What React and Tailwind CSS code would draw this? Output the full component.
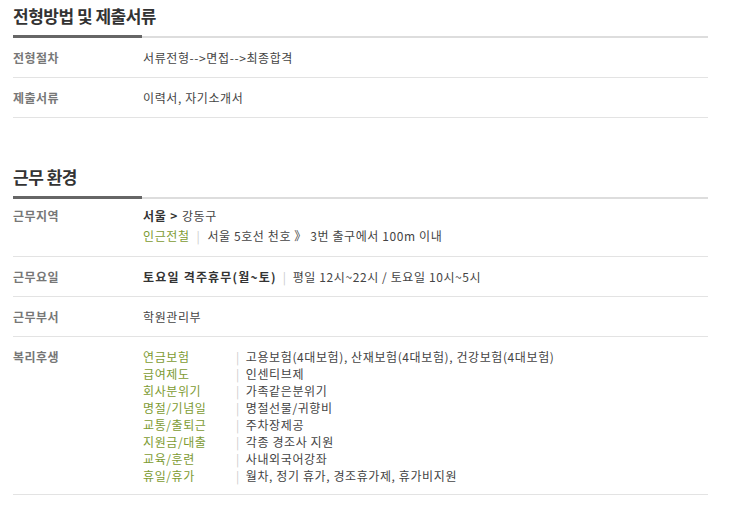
import React from 'react';

const green = 'text-[#7d9b32]';

const Heading = ({ children, className = '' }) => (
  <div className={className}>
    <h2 className="text-[17px] font-bold leading-[24px] text-[#333] tracking-[-0.5px]">{children}</h2>
    <div className="mt-[7px] flex h-[3px] items-end">
      <div className="h-[3px] w-[129px] bg-[#666]" />
      <div className="h-[2px] flex-1 bg-[#ddd]" />
    </div>
  </div>
);

const Row = ({ label, children, className = 'pt-[11px] pb-[10px]' }) => (
  <div className={`flex border-b border-[#e3e3e3] ${className}`}>
    <div className="w-[130px] shrink-0 font-bold text-[#777] tracking-[0.5px]">{label}</div>
    <div className="flex-1 text-[#444] tracking-[0.6px]">{children}</div>
  </div>
);

const Bar = ({ className = '' }) => <span className={`text-[#ccc] ${className}`}>|</span>;

const benefits = [
  ['연금보험', '고용보험(4대보험), 산재보험(4대보험), 건강보험(4대보험)'],
  ['급여제도', '인센티브제'],
  ['회사분위기', '가족같은분위기'],
  ['명절/기념일', '명절선물/귀향비'],
  ['교통/출퇴근', '주차장제공'],
  ['지원금/대출', '각종 경조사 지원'],
  ['교육/훈련', '사내외국어강좌'],
  ['휴일/휴가', '월차, 정기 휴가, 경조휴가제, 휴가비지원'],
];

export default function App() {
  return (
    <div className="min-h-screen bg-white pt-[4px] font-['Noto_Sans_CJK_KR',sans-serif] text-[12px] leading-[18px]">
      <div className="ml-[13px] w-[695px]">
        <Heading>전형방법 및 제출서류</Heading>
        <Row label="전형절차">서류전형--&gt;면접--&gt;최종합격</Row>
        <Row label="제출서류">이력서, 자기소개서</Row>

        <Heading className="mt-[47px]">근무 환경</Heading>
        <Row label="근무지역" className="pt-[7px] pb-[10px] leading-[20px]">
          <div>
            <span className="font-bold text-[#333]">서울</span>
            <span className="mx-[4px] font-bold text-[#333]">&gt;</span>
            강동구
          </div>
          <div>
            <span className={green}>인근전철</span>
            <Bar className="mx-[7px]" />
            서울 5호선 천호 》 3번 출구에서 100m 이내
          </div>
        </Row>
        <Row label="근무요일">
          <span className="font-bold text-[#333] tracking-[1.2px]">토요일 격주휴무(월~토)</span>
          <Bar className="mx-[6px]" />
          평일 12시~22시 / 토요일 10시~5시
        </Row>
        <Row label="근무부서">학원관리부</Row>
        <Row label="복리후생" className="pt-[11px] pb-[10px] leading-[17px]">
          {benefits.map(([k, v]) => (
            <div key={k} className="flex">
              <span className={`w-[93px] shrink-0 ${green}`}>{k}</span>
              <Bar className="mr-[6px]" />
              <span>{v}</span>
            </div>
          ))}
        </Row>
      </div>
    </div>
  );
}
